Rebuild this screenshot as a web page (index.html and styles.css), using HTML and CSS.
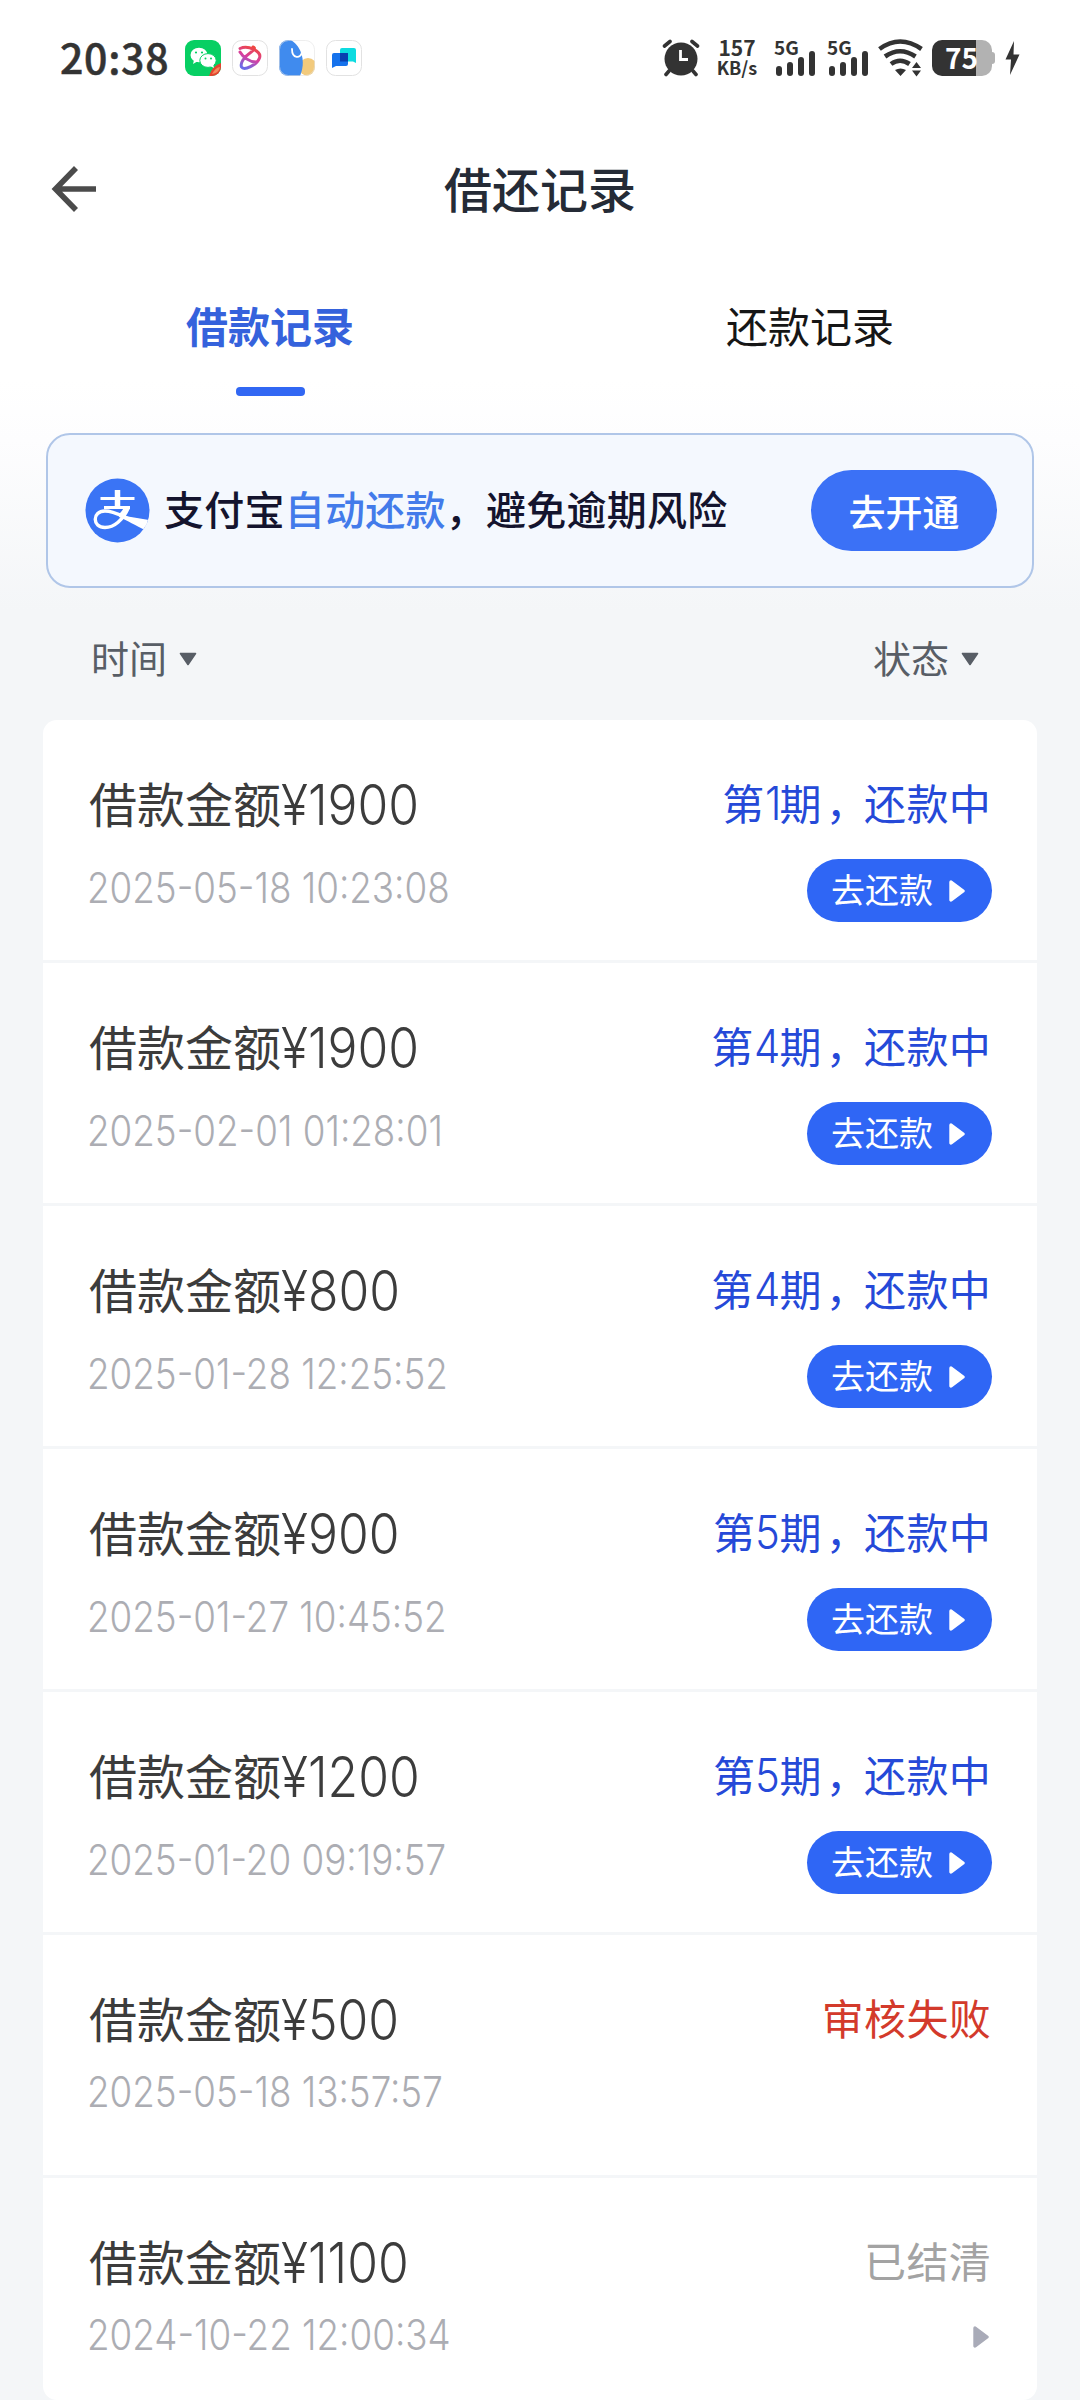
FILE: index.html
```html
<!DOCTYPE html>
<html lang="zh-CN">
<head>
<meta charset="utf-8">
<title>借还记录</title>
<link rel="stylesheet" href="styles.css">
</head>
<body>
<svg class="defs" width="0" height="0">
  <symbol id="play" viewBox="0 0 16 22"><path d="M2 2 L14 11 L2 20 Z" fill="currentColor" stroke="currentColor" stroke-width="3.4" stroke-linejoin="round"/></symbol>
  <symbol id="down" viewBox="0 0 18 14"><path d="M1.5 1.5 H16.5 L9 12.5 Z" fill="currentColor" stroke="currentColor" stroke-width="1.6" stroke-linejoin="round"/></symbol>
  <symbol id="signal" viewBox="0 0 42 38">
    <rect x="2" y="27" width="6" height="10" rx="3"/><rect x="13" y="23" width="6" height="14" rx="3"/><rect x="24" y="18" width="6" height="19" rx="3"/><rect x="35" y="12" width="6" height="25" rx="3"/>
  </symbol>
</svg>
<div class="page">
  <header class="statusbar">
    <span class="clock">20:38</span>
    <div class="apps">
      <svg width="36" height="36" viewBox="0 0 36 36"><clipPath id="c1"><rect width="36" height="36" rx="9"/></clipPath><g clip-path="url(#c1)"><rect width="36" height="36" fill="#07cf63"/><path d="M24 36 Q27 26 36 23 V36Z" fill="#e5432f"/><path d="M27 34 Q31 27 35 27 Q34 33 27 34Z" fill="#f58a5c"/><ellipse cx="14" cy="15" rx="8.5" ry="7.3" fill="#fff"/><path d="M9 20 L8 24 L13 21Z" fill="#fff"/><ellipse cx="23" cy="20.5" rx="8.2" ry="6.9" fill="#fff" stroke="#07cf63"/><path d="M25 26 L29 28 L28 24Z" fill="#fff"/><g fill="#07cf63"><circle cx="11" cy="12.5" r="1.1"/><circle cx="17" cy="12.5" r="1.1"/><circle cx="20.5" cy="18.5" r="1"/><circle cx="26" cy="18.5" r="1"/></g></g></svg>
      <svg width="36" height="36" viewBox="0 0 36 36"><linearGradient id="g1" x1="0.3" y1="1" x2="0.7" y2="0"><stop offset="0" stop-color="#6d6be8"/><stop offset=".5" stop-color="#d63fa0"/><stop offset="1" stop-color="#f0473f"/></linearGradient><rect x=".5" y=".5" width="35" height="35" rx="9" fill="#fff" stroke="#e2e2e2"/><path d="M8 8.500 C16 5 30 11 27.500 18 C25 25 12 31 9.500 27 C8 23 12 17 18 13 C22 10 24 8 21 7 M8 12 C11 17 17 22 24 22" fill="none" stroke="url(#g1)" stroke-width="3" stroke-linecap="round"/></svg>
      <svg width="36" height="36" viewBox="0 0 36 36"><clipPath id="c2"><rect width="36" height="36" rx="9"/></clipPath><g clip-path="url(#c2)"><rect width="36" height="36" fill="#fff"/><circle cx="29" cy="27" r="9" fill="#f2ca7c"/><path d="M0 0 H12 C23 7 27 22 21 36 H0Z" fill="#408bee"/><path d="M13 9 C13 19 22 19 23 12" fill="none" stroke="#fff" stroke-width="1.800" stroke-linecap="round"/></g><rect x=".5" y=".5" width="35" height="35" rx="9" fill="none" stroke="#e2e2e2" stroke-opacity=".6"/></svg>
      <svg width="36" height="36" viewBox="0 0 36 36"><rect x=".5" y=".5" width="35" height="35" rx="9" fill="#fff" stroke="#e2e2e2"/><path d="M16 8 H28 Q30 8 30 10 V23 L27 21.500 H14 V10 Q14 8 16 8Z" fill="#0ddbe0"/><path d="M8 13 H22 V24 Q22 26 20 26 H10 L6 28 V15 Q6 13 8 13Z" fill="#1672ec"/><path d="M14 13 H22 V21.500 H14Z" fill="#083fb0"/></svg>
    </div>
    <div class="indicators">
      <svg class="alarm" width="38" height="38" viewBox="0 0 38 38" fill="none" stroke="#333" stroke-linecap="round"><circle cx="19" cy="20" r="16.500" fill="#333" stroke="none"/><path d="M2.500 7 L8 2.500 M30 2.500 L35.500 7" stroke-width="3.600"/><path d="M7 32 L4 35.500 M31 32 L34 35.500" stroke-width="3.600"/><path d="M18.500 11 V20.500 H26" stroke="#fff" stroke-width="2.800" stroke-linecap="butt"/></svg>
      <div class="speed"><span>157</span><span>KB/s</span></div>
      <div class="cell"><span>5G</span><svg width="42" height="38"><use href="#signal"/></svg></div>
      <div class="cell second"><span>5G</span><svg width="42" height="38"><use href="#signal"/></svg></div>
      <svg class="wifi" width="45" height="38" viewBox="0 0 45 38" fill="none" stroke="#333" stroke-width="4.600"><path d="M1.500 10 Q22 -5 43.500 10 M7 17.500 Q22 7 37.500 17.500 M13 25 Q22 18.500 31.500 25"/><path d="M17 31 Q22.500 28 28 31 L22.500 37Z M34 29 L38.500 23 L43 29Z M34 31.500 H43 L38.500 37.500Z" fill="#333" stroke="none"/></svg>
      <div class="battery"><span>75</span></div>
      <svg class="bolt" width="15" height="34" viewBox="0 0 15 34"><path d="M9 0 L.5 18.500 H6 L5 34 L14.500 13.500 H8.500Z" fill="#333"/></svg>
    </div>
  </header>

  <div class="titlebar">
    <svg class="back" width="46" height="48" viewBox="0 0 46 48" fill="none" stroke="#4b4b4b" stroke-width="5.600"><path d="M25 3 L4.500 24 L25 45 M4.500 24 H45"/></svg>
    <h1>借还记录</h1>
  </div>

  <nav class="tabs">
    <a class="tab active">借款记录</a>
    <a class="tab">还款记录</a>
  </nav>

  <section class="banner">
    <svg width="65" height="65" viewBox="0 0 65 65"><clipPath id="c3"><circle cx="32.500" cy="32.500" r="32"/></clipPath><circle cx="32.500" cy="32.500" r="32" fill="#3a74f5"/><g fill="none" stroke="#fff" clip-path="url(#c3)"><path d="M15.500 20.500 H49.500" stroke-width="3"/><path d="M32.500 12 V30" stroke-width="5.500"/><path d="M19 29.500 H45" stroke-width="2.800"/><path d="M43.500 29.500 C38 42 29 49.500 20 49.500 C7 49.500 7 33 20 33 C33 33 42 43 62 46.500" stroke-width="3.400"/><path d="M43 29 C42 33 40 37 37 40 L33 37 C36 34 38 32 39 29Z M34 37 L64 42 L60 52 C50 47 43 43 34 39Z" fill="#fff" stroke="none"/></g></svg>
    <p>支付宝<em>自动还款</em>，避免逾期风险</p>
    <button class="open">去开通</button>
  </section>

  <div class="filters">
    <span>时间<svg width="18" height="14"><use href="#down"/></svg></span>
    <span>状态<svg width="18" height="14"><use href="#down"/></svg></span>
  </div>

  <main class="records">
    <article class="record">
      <h2>借款金额<span class="num">¥1900</span></h2><p class="state">第<b class="one">1</b>期<i>，</i>还款中</p>
      <time>2025-05-18 10:23:08</time><button class="repay">去还款<svg width="16" height="22"><use href="#play"/></svg></button>
    </article>
    <article class="record">
      <h2>借款金额<span class="num">¥1900</span></h2><p class="state">第<b>4</b>期<i>，</i>还款中</p>
      <time>2025-02-01 01:28:01</time><button class="repay">去还款<svg width="16" height="22"><use href="#play"/></svg></button>
    </article>
    <article class="record">
      <h2>借款金额<span class="num">¥800</span></h2><p class="state">第<b>4</b>期<i>，</i>还款中</p>
      <time>2025-01-28 12:25:52</time><button class="repay">去还款<svg width="16" height="22"><use href="#play"/></svg></button>
    </article>
    <article class="record">
      <h2>借款金额<span class="num">¥900</span></h2><p class="state">第<b>5</b>期<i>，</i>还款中</p>
      <time>2025-01-27 10:45:52</time><button class="repay">去还款<svg width="16" height="22"><use href="#play"/></svg></button>
    </article>
    <article class="record">
      <h2>借款金额<span class="num">¥1200</span></h2><p class="state">第<b>5</b>期<i>，</i>还款中</p>
      <time>2025-01-20 09:19:57</time><button class="repay">去还款<svg width="16" height="22"><use href="#play"/></svg></button>
    </article>
    <article class="record compact">
      <h2>借款金额<span class="num">¥500</span></h2><p class="state failed">审核失败</p>
      <time>2025-05-18 13:57:57</time>
    </article>
    <article class="record compact">
      <h2>借款金额<span class="num">¥1100</span></h2><p class="state settled">已结清</p>
      <time>2024-10-22 12:00:34</time><svg class="more" width="16" height="22"><use href="#play"/></svg>
    </article>
  </main>
</div>
</body>
</html>
```
FILE: styles.css
```css
* { box-sizing: border-box; margin: 0; padding: 0; }
body { width: 1080px; font-family: "Noto Sans CJK SC", sans-serif; color: #3c3c3c; }
svg { display: block; flex: none; }
button { border: 0; font-family: inherit; color: #fff; }
.defs { position: absolute; }
.page {
  height: 2400px;
  overflow: hidden;
  background: linear-gradient(#fff 380px, #fdfdfe 440px, #f4f6f8 610px);
}

.statusbar { display: flex; align-items: center; height: 116px; padding: 0 60px 0 60px; color: #333; }
.clock { font-size: 41px; font-weight: 500; line-height: 50px; letter-spacing: .7px; width: 125px; padding-bottom: 5px; -webkit-text-stroke: .5px #333; }
.apps { display: flex; gap: 11px; }
.indicators { display: flex; align-items: center; margin-left: auto; font-weight: 700; }
.speed { display: flex; flex-direction: column; align-items: center; width: 44px; margin-left: 15px; padding-bottom: 3px; line-height: 20px; font-size: 21px; }
.speed span + span { font-size: 18px; }
.cell { position: relative; width: 42px; margin-left: 15px; fill: #333; }
.cell.second { margin-left: 11px; }
.cell span { position: absolute; left: 0; top: -2px; font-size: 19px; line-height: 20px; }
.wifi { margin-left: 9px; }
.battery {
  width: 60px; height: 36px; margin-left: 9px; border-radius: 10px; position: relative;
  background: linear-gradient(90deg, #333 44px, #b2b2b2 44px);
  color: #fff; font-size: 28px; line-height: 34px; padding-left: 13px;
}
.battery::after { content: ""; position: absolute; right: -3px; top: 12px; width: 3px; height: 12px; border-radius: 0 3px 3px 0; background: #b2b2b2; }
.bolt { margin-left: 13px; }

.titlebar { display: grid; grid-template-columns: 100px 1fr 100px; align-items: center; height: 146px; }
.back { margin-left: 51px; }
h1 { text-align: center; font-size: 48px; font-weight: 500; line-height: 60px; color: #252b36; padding-bottom: 5px; }

.tabs { display: grid; grid-template-columns: 1fr 1fr; height: 171px; }
.tab { display: flex; flex-direction: column; align-items: center; padding-top: 33px; font-size: 42px; line-height: 60px; color: #161616; }
.tab.active { font-weight: 700; color: #3562dc; }
.tab.active::after { content: ""; width: 69px; height: 9px; margin-top: 32px; border-radius: 4px; background: #3167f3; }

.banner {
  display: flex; align-items: center; height: 155px; margin: 0 46px; padding: 0 35px 0 37px;
  border: 2px solid #b0c6e8; border-radius: 24px; background: #f4f8fe;
}
.banner p { margin-left: 14px; padding-bottom: 6px; font-size: 40px; font-weight: 500; letter-spacing: .25px; color: #14142e; white-space: nowrap; }
.banner em { font-style: normal; color: #437bea; }
.open { width: 186px; height: 81px; margin-left: auto; border-radius: 41px; background: #3b71f6; font-size: 37px; font-weight: 500; line-height: 78px; }

.filters { display: flex; justify-content: space-between; align-items: center; height: 132px; padding: 6px 101px 0 91px; font-size: 38px; color: #585e66; }
.filters span { display: flex; align-items: center; gap: 12px; line-height: 50px; }
.filters svg { margin-top: 3px; }

.records { margin: 0 43px; height: 1680px; border-radius: 14px; background: #fff; overflow: hidden; }
.record {
  display: grid; grid-template-columns: 1fr auto; grid-template-rows: 60px 63px; row-gap: 27px;
  align-items: center; height: 243px; padding: 52px 45px 0 46px; border-bottom: 3px solid #f4f6f8;
}
.record.compact { grid-template-rows: 60px 40px; row-gap: 25px; }
.record:last-child { border: 0; height: 222px; }
h2 { font-size: 48px; font-weight: 400; line-height: 60px; white-space: nowrap; }
.num, time, .state b { font-family: Inter, sans-serif; display: inline-block; transform: scaleX(.89); transform-origin: left; }
.num { font-size: 56px; font-weight: 350; line-height: 56px; vertical-align: -2px; }
time { font-size: 42.500px; font-weight: 340; line-height: 42px; margin: 0 0 5px -2px; color: #acadb3; justify-self: start; transform: scaleX(.865); }
.compact time { margin-bottom: 0; }
.state { font-size: 42px; line-height: 60px; letter-spacing: .3px; margin-right: 1px; color: #2549d8; text-align: right; white-space: nowrap; }
.state b { font-size: 47px; font-weight: 350; line-height: 47px; margin-right: -4px; }
.state i { font-style: normal; position: relative; left: 4px; }
.state.failed { color: #d33a2b; }
.state.settled { color: #a3a3a3; }
.repay { display: flex; align-items: center; gap: 16px; justify-self: end; margin-right: 0; width: 185px; height: 63px; padding: 0 0 4px 24px; border-radius: 32px; background: #2f66f5; font-size: 34px; }
.repay svg { margin-top: 4px; }
.more { justify-self: end; margin: 3px 3px 0 0; color: #a9abb8; }
```
